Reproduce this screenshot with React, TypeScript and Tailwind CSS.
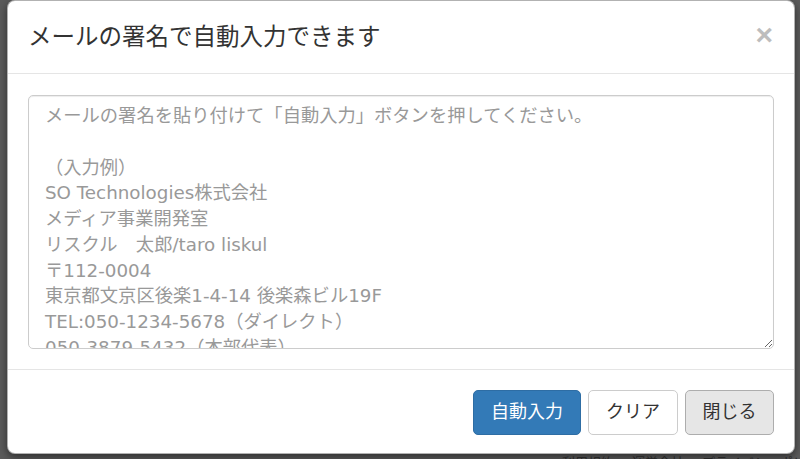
import React from "react";

const placeholder = [
  "メールの署名を貼り付けて「自動入力」ボタンを押してください。",
  "",
  "（入力例）",
  "SO Technologies株式会社",
  "メディア事業開発室",
  "リスクル　太郎/taro liskul",
  "〒112-0004",
  "東京都文京区後楽1-4-14 後楽森ビル19F",
  "TEL:050-1234-5678（ダイレクト）",
  "050-3879-5432（本部代表）",
  "FAX:03-1234-5678",
  "Mail:taro@example.com",
].join("\n");

const SignatureModal: React.FC = () => {
  return (
    <div className="ml-[7px] mr-[5px] bg-white rounded-[8px] border border-black/30 shadow-[0_3px_9px_rgba(0,0,0,0.5)] overflow-hidden">
      <div className="flex items-center justify-between pl-[20px] pr-[20px] pt-[20px] pb-[19px] border-b border-[#e5e5e5]">
        <h4 className="text-[23.5px] leading-[33px] text-[#333]">
          メールの署名で自動入力できます
        </h4>
        <button
          type="button"
          className="text-[30px] leading-none font-bold text-[#bdbdbd] -mt-[6px] mr-[1px]"
        >
          ×
        </button>
      </div>

      <div className="p-[20px] pt-[21px]">
        <textarea
          placeholder={placeholder}
          className="block w-full h-[254px] border border-[#ccc] rounded-[5px] px-[16px] py-[7px] font-['DejaVu_Sans','Noto_Sans_CJK_JP',sans-serif] text-[18.3px] leading-[25.75px] text-[#555] placeholder:text-[#999] shadow-[inset_0_1px_1px_rgba(0,0,0,0.075)] outline-none"
        />
      </div>

      <div className="flex justify-end gap-[7px] px-[20px] pt-[20px] pb-[18px] border-t border-[#e5e5e5]">
        <button
          type="button"
          className="h-[45px] w-[108px] rounded-[5px] bg-[#337ab7] border border-[#2e6da4] text-white text-[18px]"
        >
          自動入力
        </button>
        <button
          type="button"
          className="h-[45px] w-[90px] rounded-[5px] bg-white border border-[#ccc] text-[#333] text-[18px]"
        >
          クリア
        </button>
        <button
          type="button"
          className="h-[45px] w-[89px] rounded-[5px] bg-[#e6e6e6] border border-[#adadad] text-[#333] text-[18px]"
        >
          閉じる
        </button>
      </div>
    </div>
  );
};

export default function App() {
  return (
    <div className="h-[459px] w-full overflow-hidden bg-[#5b5b5b] font-['Liberation_Sans','Noto_Sans_CJK_JP',sans-serif]">
      <SignatureModal />
      <div className="flex gap-[18px] pl-[562px] whitespace-nowrap text-[13px] leading-[18px] text-[#262626]">
        <span>利用規約</span>
        <span>運営会社</span>
        <span>プライバシーポリシー</span>
      </div>
    </div>
  );
}
